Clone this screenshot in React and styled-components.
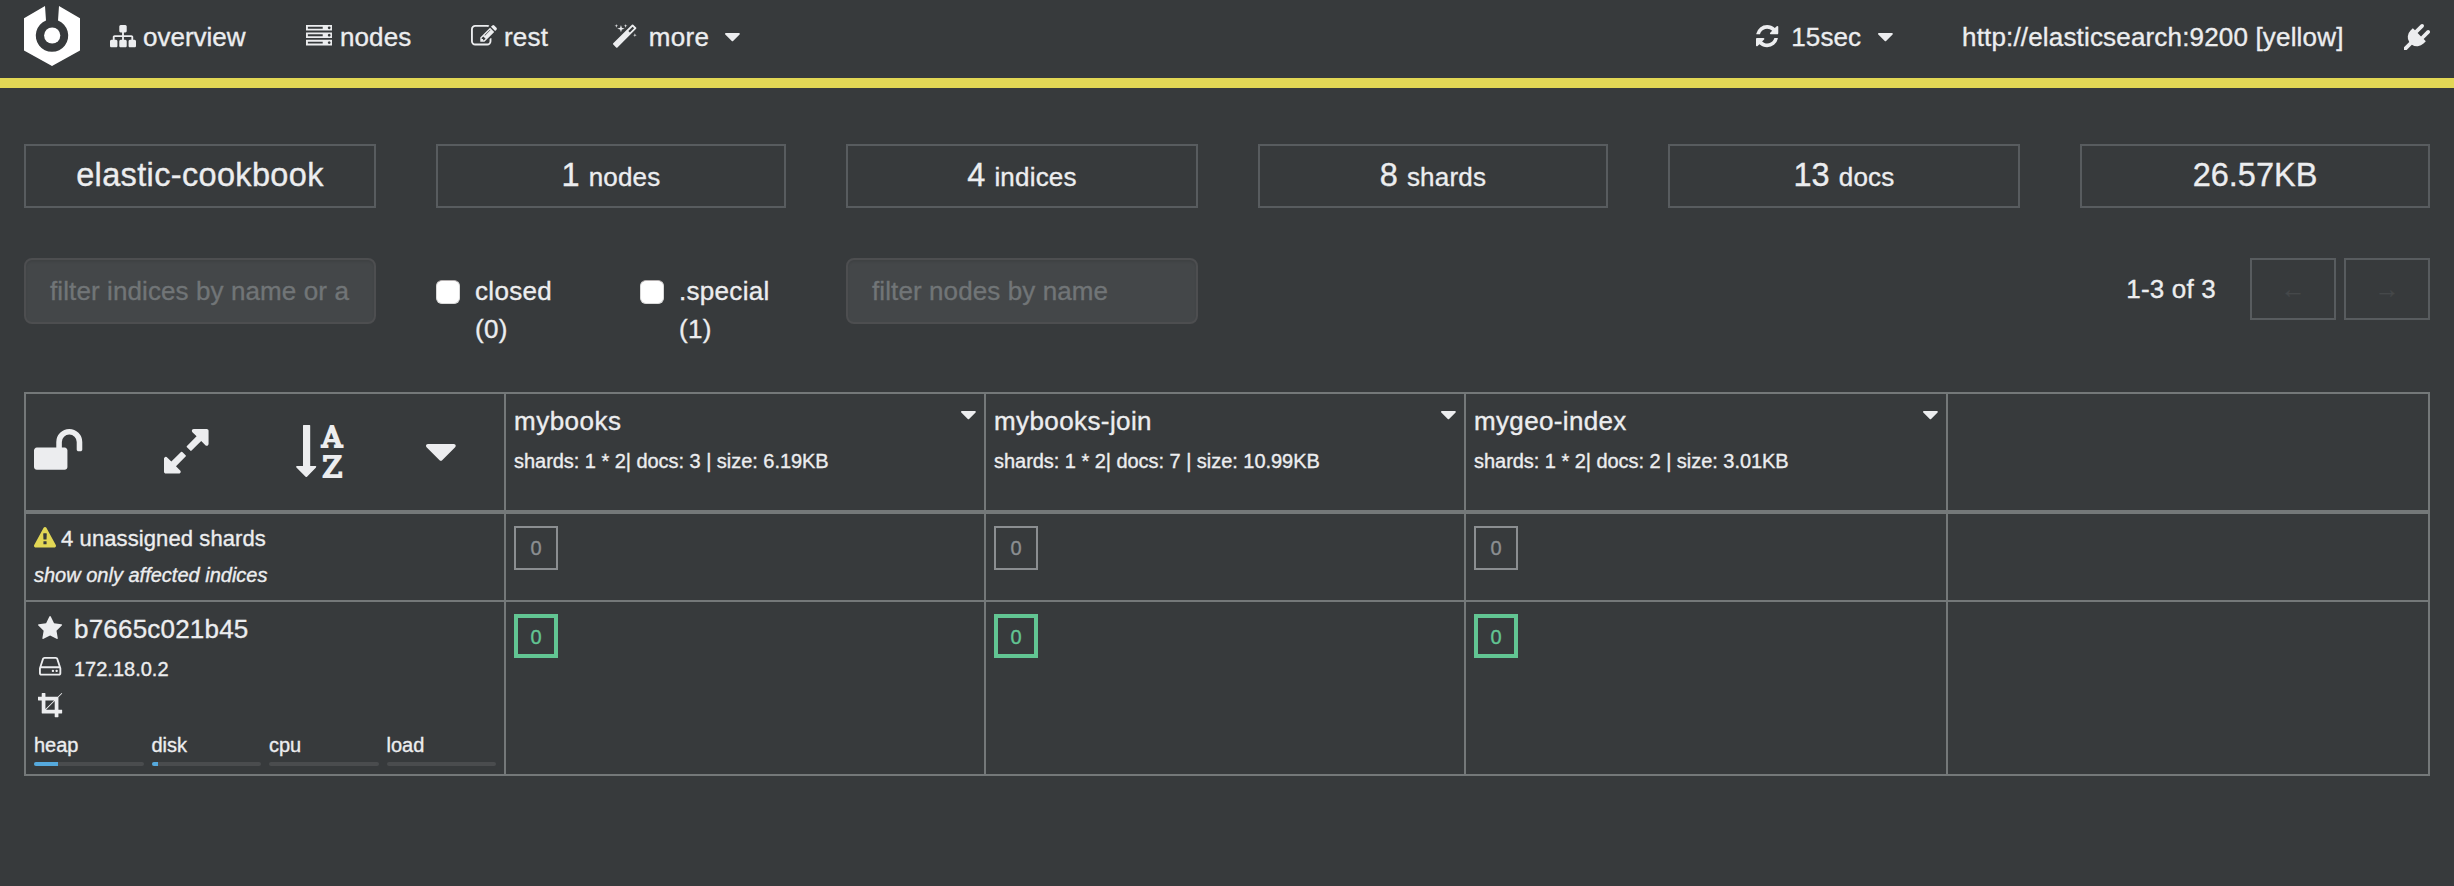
import React from "react";
import styled, { createGlobalStyle } from "styled-components";

const c = {
  bg: "#373a3c",
  text: "#ecedef",
  line: "#747879",
  box: "#585c5f",
  yellow: "#e2d755",
  green: "#62c593",
  muted: "#8b8e91",
  blue: "#55a9dd",
  track: "#4a4c4e",
};

const GlobalStyle = createGlobalStyle`
  *, *::before, *::after { box-sizing: border-box; }
  body {
    margin: 0;
    background: ${c.bg};
    color: ${c.text};
    font: 26px/37px "Liberation Sans", Arial, sans-serif;
    -webkit-text-stroke: 0.35px currentColor;
  }
`;

const Page = styled.div`
  min-height: 886px;
  overflow: hidden;
`;

/* icons: [viewBox cut to the drawing, path] in 1792 units per em */
const ICONS = {
  sitemap: [[0, 128, 1792, 1536], "M1792 1248v320q0 40-28 68t-68 28h-320q-40 0-68-28t-28-68v-320q0-40 28-68t68-28h96v-192h-512v192h96q40 0 68 28t28 68v320q0 40-28 68t-68 28h-320q-40 0-68-28t-28-68v-320q0-40 28-68t68-28h96v-192h-512v192h96q40 0 68 28t28 68v320q0 40-28 68t-68 28h-320q-40 0-68-28t-28-68v-320q0-40 28-68t68-28h96v-192q0-52 38-90t90-38h512v-192h-96q-40 0-68-28t-28-68v-320q0-40 28-68t68-28h320q40 0 68 28t28 68v320q0 40-28 68t-68 28h-96v192h512q52 0 90 38t38 90v192h96q40 0 68 28t28 68z"],
  server: [[0, 128, 1792, 1408], "M128 1408h1024v-128h-1024v128zm0-512h1024v-128h-1024v128zm1568 448q0-40-28-68t-68-28-68 28-28 68 28 68 68 28 68-28 28-68zm-1568-960h1024v-128h-1024v128zm1568 448q0-40-28-68t-68-28-68 28-28 68 28 68 68 28 68-28 28-68zm0-512q0-40-28-68t-68-28-68 28-28 68 28 68 68 28 68-28 28-68zm96 832v384h-1792v-384h1792zm0-512v384h-1792v-384h1792zm0-512v384h-1792v-384h1792z"],
  edit: [[0, 128, 1792, 1408], "M888 1184l116-116-152-152-116 116v56h96v96h56zm440-720q-16-16-33 1l-350 350q-17 17-1 33t33-1l350-350q17-17 1-33zm80 594v190q0 119-84.5 203.5t-203.5 84.5h-832q-119 0-203.5-84.5t-84.5-203.5v-832q0-119 84.5-203.5t203.5-84.5h832q63 0 117 25 15 7 18 23 3 17-9 29l-49 49q-14 14-32 8-23-6-45-6h-832q-66 0-113 47t-47 113v832q0 66 47 113t113 47h832q66 0 113-47t47-113v-126q0-13 9-22l64-64q15-15 35-7t20 29zm-96-738l288 288-672 672h-288v-288zm444 132l-92 92-288-288 92-92q28-28 68-28t68 28l152 152q28 28 28 68t-28 68z"],
  magic: [[91, 0, 1637, 1637], "M1254 581l293-293-107-107-293 293zm447-293q0 27-18 45l-1286 1286q-18 18-45 18t-45-18l-198-198q-18-18-18-45t18-45l1286-1286q18-18 45-18t45 18l198 198q18 18 18 45zm-1351-190l98 30-98 30-30 98-30-98-98-30 98-30 30-98zm350 162l196 60-196 60-60 196-60-196-196-60 196-60 60-196zm930 478l98 30-98 30-30 98-30-98-98-30 98-30 30-98zm-640-640l98 30-98 30-30 98-30-98-98-30 98-30 30-98z"],
  refresh: [[128, 128, 1536, 1536], "M1639 1056q0 5-1 7-64 268-268 434.5t-478 166.5q-146 0-282.5-55t-243.5-157l-129 129q-19 19-45 19t-45-19-19-45v-448q0-26 19-45t45-19h448q26 0 45 19t19 45-19 45l-137 137q71 66 161 102t187 36q134 0 250-65t186-179q11-17 53-117 8-23 30-23h192q13 0 22.5 9.5t9.5 22.5zm25-800v448q0 26-19 45t-45 19h-448q-26 0-45-19t-19-45 19-45l138-138q-148-137-349-137-134 0-250 65t-186 179q-11 17-53 117-8 23-30 23h-199q-13 0-22.5-9.5t-9.5-22.5v-7q65-268 270-434.5t480-166.5q146 0 284 55.5t245 156.5l130-129q19-19 45-19t45 19 19 45z"],
  plug: [[0, 0, 1792, 1792], "M1755 453q37 38 37 90.5t-37 90.5l-401 400 150 150-160 160q-163 163-389.5 186.5t-411.5-100.5l-362 362h-181v-181l362-362q-124-185-100.5-411.5t186.5-389.5l160-160 150 150 400-401q38-37 91-37t90 37 37 90.5-37 90.5l-400 401 234 234 401-400q38-37 91-37t90 37z"],
  caret: [[384, 640, 1024, 576], "M1408 704q0 26-19 45l-448 448q-19 19-45 19t-45-19l-448-448q-19-19-19-45t19-45 45-19h896q26 0 45 19t19 45z"],
  unlock: [[64, 128, 1664, 1408], "M1728 576v256q0 26-19 45t-45 19h-64q-26 0-45-19t-19-45v-256q0-106-75-181t-181-75-181 75-75 181v192h96q40 0 68 28t28 68v576q0 40-28 68t-68 28h-960q-40 0-68-28t-28-68v-576q0-40 28-68t68-28h672v-192q0-185 131.5-316.5t316.5-131.5 316.5 131.5 131.5 316.5z"],
  expand: [[128, 128, 1536, 1536], "M883 1056q0 13-10 23l-332 332 144 144q19 19 19 45t-19 45-45 19h-448q-26 0-45-19t-19-45v-448q0-26 19-45t45-19 45 19l144 144 332-332q10-10 23-10t23 10l114 114q10 10 10 23zm781-864v448q0 26-19 45t-45 19-45-19l-144-144-332 332q-10 10-23 10t-23-10l-114-114q-10-10-10-23t10-23l332-332-144-144q-19-19-19-45t19-45 45-19h448q26 0 45 19t19 45z"],
  warning: [[0, 0, 1792, 1664], "M1024 1375v-190q0-14-9.5-23.5t-22.5-9.5h-192q-13 0-22.5 9.5t-9.5 23.5v190q0 14 9.5 23.5t22.5 9.5h192q13 0 22.5-9.5t9.5-23.5zm-2-374l18-459q0-12-10-19-13-11-24-11h-220q-11 0-24 11-10 7-10 21l17 457q0 10 10 16.5t24 6.5h185q14 0 23.5-6.5t10.5-16.5zm-14-934l768 1408q35 63-2 126-17 29-46.5 46t-63.5 17h-1536q-34 0-63.5-17t-46.5-46q-37-63-2-126l768-1408q17-31 47-49t65-18 65 18 47 49z"],
  star: [[64, 32, 1664, 1588], "M1728 647q0 22-26 48l-363 354 86 500q1 7 1 20 0 21-10.5 35.5t-30.5 14.5q-19 0-40-12l-449-236-449 236q-22 12-40 12-21 0-31.5-14.5t-10.5-35.5q0-6 2-20l86-500-364-354q-25-27-25-48 0-37 56-46l502-73 225-455q19-41 49-41t49 41l225 455 502 73q56 9 56 46z"],
  hdd: [[128, 256, 1536, 1280], "M1168 1216q0 33-23.5 56.5t-56.5 23.5-56.5-23.5-23.5-56.5 23.5-56.5 56.5-23.5 56.5 23.5 23.5 56.5zm256 0q0 33-23.5 56.5t-56.5 23.5-56.5-23.5-23.5-56.5 23.5-56.5 56.5-23.5 56.5 23.5 23.5 56.5zm112 160v-320q0-13-9.5-22.5t-22.5-9.5h-1216q-13 0-22.5 9.5t-9.5 22.5v320q0 13 9.5 22.5t22.5 9.5h1216q13 0 22.5-9.5t9.5-22.5zm-1230-480h1180l-157-482q-4-13-16-21.5t-26-8.5h-782q-14 0-26 8.5t-16 21.5zm1358 160v320q0 66-47 113t-113 47h-1216q-66 0-113-47t-47-113v-320q0-25 16-75l197-606q17-53 63-86t101-33h782q55 0 101 33t63 86l197 606q16 50 16 75z"],
  crop: [[0, 128, 1664, 1664], "M557 1280h595v-595zm-45-45l595-595h-595v595zm1152 77v192q0 14-9 23t-23 9h-224v224q0 14-9 23t-23 9h-192q-14 0-23-9t-9-23v-224h-864q-14 0-23-9t-9-23v-864h-224q-14 0-23-9t-9-23v-192q0-14 9-23t23-9h224v-224q0-14 9-23t23-9h192q14 0 23 9t9 23v224h851l246-247q10-9 23-9t23 9q9 10 9 23t-9 23l-247 246v851h224q14 0 23 9t9 23z"],
};

const Svg = styled.svg`
  display: block;
  flex: none;
  overflow: visible;
  fill: ${(p) => p.$color || "currentColor"};
  margin-bottom: ${(p) => p.$lift || 0}px;
`;

function Icon({ name, em = 26, color, lift }) {
  const [box, d] = ICONS[name];
  return (
    <Svg
      viewBox={box.join(" ")}
      width={(box[2] / 1792) * em}
      height={(box[3] / 1792) * em}
      $color={color}
      $lift={lift}
      aria-hidden="true"
    >
      <path d={d} />
    </Svg>
  );
}

/* top bar */
const Navbar = styled.nav`
  display: flex;
  align-items: center;
  height: 88px;
  padding: 0 24px 4px;
  border-bottom: 10px solid ${c.yellow};
`;
const Brand = styled.div`
  width: 86px;
  margin-bottom: 2px;
`;
const NavItem = styled.div`
  display: flex;
  align-items: center;
  gap: ${(p) => p.$gap}px;
  width: ${(p) => p.$width}px;
  line-height: 74px;
  white-space: nowrap;
`;
const NavLabel = styled.span`
  width: ${(p) => (p.$width ? p.$width + "px" : "auto")};
  letter-spacing: ${(p) => p.$track || 0}px;
`;
const Spacer = styled.div`
  flex: 1;
`;

function Logo() {
  return (
    <Svg width="56" height="60" viewBox="0 0 56 60" $color="#fff">
      <path d="M21 0 L0 12.3 V44.4 L28 60 L56 44.4 V12.3 L35 0 L34 14.6 A16.2 16.2 0 1 1 22 14.6 Z" />
      <circle cx="28.2" cy="29.5" r="8.1" />
    </Svg>
  );
}

/* overview tiles and filters */
const SixColumns = styled.div`
  display: grid;
  grid-template-columns: repeat(3, 352px 350px);
  column-gap: 60px;
  height: ${(p) => p.$height}px;
  padding: 0 24px;
  margin-top: ${(p) => p.$top}px;
`;
const Tile = styled.div`
  height: 64px;
  border: 2px solid ${c.box};
  text-align: center;
  font-size: 32.5px;
  line-height: 58px;
  letter-spacing: ${(p) => p.$track || 0}px;
`;
const Unit = styled.span`
  font-size: 26px;
  letter-spacing: 0.2px;
`;
const TextInput = styled.div`
  height: 66px;
  padding: 0 24px;
  border: 2px solid #4d4e50;
  border-radius: 8px;
  background: #444749;
  box-shadow: inset 0 2px 2px rgba(0, 0, 0, 0.075);
  color: #717577;
  line-height: 62px;
  letter-spacing: ${(p) => p.$track || 0}px;
  white-space: nowrap;
  overflow: hidden;
`;
const Checks = styled.div`
  display: flex;
  padding-top: 14px;
  margin-right: -60px;
`;
const Check = styled.label`
  display: flex;
  width: ${(p) => p.$width}px;
  line-height: 38px;
  letter-spacing: 0.3px;
`;
const Checkbox = styled.span`
  width: 24px;
  height: 24px;
  margin: 8px ${(p) => p.$gap}px 0 0;
  border-radius: 6px;
  background: #fff;
  border: 1px solid #d9d9d9;
  border-top-color: #b5b0b0;
`;
const Pager = styled.div`
  grid-column: 4 / 7;
  display: flex;
  justify-content: flex-end;
  line-height: 62px;
`;
const PageRange = styled.span`
  margin-right: 34px;
  letter-spacing: 0.2px;
`;
const PageButton = styled.span`
  display: flex;
  align-items: center;
  justify-content: center;
  width: 86px;
  height: 62px;
  margin-left: ${(p) => (p.$next ? 8 : 0)}px;
  border: 2px solid ${c.box};
  color: #45484a;
  font: 25px/58px "Liberation Sans", sans-serif;
`;

/* shard table */
const Table = styled.div`
  margin: 48px 24px 0;
  border: solid ${c.line};
  border-width: 2px 2px 2px 0;
`;
const Row = styled.div`
  display: grid;
  grid-template-columns: 480px 480px 480px 482px 1fr;
  height: ${(p) => p.$height}px;
  border-bottom: ${(p) => p.$line || 0}px solid ${c.line};
`;
const Cell = styled.div`
  padding: 8px 8px 0;
  border-left: 2px solid ${c.line};
  min-width: 0;
`;
const ShardCell = styled(Cell)`
  padding-top: 12px;
`;
const Tools = styled(Cell)`
  display: flex;
  padding-top: 0;
`;
const Tool = styled.div`
  width: ${(p) => p.$width}px;
  padding-top: ${(p) => p.$top}px;
`;
const SortLetter = styled.text`
  font: 28.5px "DejaVu Serif", serif;
  stroke: currentColor;
  stroke-width: 1.9px;
`;
const IndexHead = styled.div`
  display: flex;
  justify-content: space-between;
  line-height: 38px;
  letter-spacing: ${(p) => p.$track}px;
`;
const MenuCaret = styled.span`
  padding-top: 9px;
`;
const IndexInfo = styled.div`
  margin-top: 2px;
  font-size: 20px;
  line-height: 38px;
  letter-spacing: -0.04px;
  white-space: nowrap;
`;
const Unassigned = styled.div`
  display: flex;
  align-items: center;
  gap: 5px;
  font-size: 22px;
  line-height: 33px;
  letter-spacing: 0.1px;
`;
const Affected = styled.div`
  font-size: 20px;
  font-style: italic;
  line-height: 40px;
`;
const Shard = styled.div`
  width: 44px;
  height: 44px;
  border: ${(p) => (p.$assigned ? 4 : 2)}px solid ${(p) => (p.$assigned ? c.green : c.muted)};
  color: ${(p) => (p.$assigned ? c.green : c.muted)};
  font-size: 20px;
  line-height: ${(p) => (p.$assigned ? 38 : 41)}px;
  text-align: center;
`;
const NodeLine = styled.div`
  display: flex;
  align-items: center;
  height: ${(p) => p.$height}px;
  font-size: ${(p) => p.$size || 20}px;
  line-height: ${(p) => p.$height}px;
  letter-spacing: ${(p) => p.$track || 0}px;
`;
const NodeIcon = styled.span`
  display: flex;
  justify-content: center;
  width: 33px;
  margin-right: 7px;
`;
const Meters = styled.div`
  display: grid;
  grid-template-columns: repeat(4, 1fr);
  column-gap: 8px;
  margin-top: 7px;
  font-size: 20px;
  line-height: 34px;
`;
const Track = styled.div`
  height: 4px;
  border-radius: 2px;
  background: ${c.track};
  overflow: hidden;
`;
const Fill = styled.div`
  height: 4px;
  background: ${c.blue};
`;

const tiles = [
  { n: "elastic-cookbook", track: 0.35 },
  { n: "1", unit: "nodes" },
  { n: "4", unit: "indices" },
  { n: "8", unit: "shards" },
  { n: "13", unit: "docs" },
  { n: "26.57KB", track: 0 },
];
const indices = [
  { name: "mybooks", docs: 3, size: "6.19KB", track: 0.5 },
  { name: "mybooks-join", docs: 7, size: "10.99KB", track: 0.4 },
  { name: "mygeo-index", docs: 2, size: "3.01KB", track: 0.35 },
];
const meters = [
  { name: "heap", value: 22 },
  { name: "disk", value: 5.5 },
  { name: "cpu", value: 0 },
  { name: "load", value: 0 },
];

export default function App() {
  return (
    <Page>
      <GlobalStyle />
      <Navbar>
        <Brand><Logo /></Brand>
        <NavItem $width={196} $gap={7}>
          <Icon name="sitemap" lift={2} />
          <NavLabel>overview</NavLabel>
        </NavItem>
        <NavItem $width={165} $gap={8}>
          <Icon name="server" lift={3} />
          <NavLabel $track={0.1}>nodes</NavLabel>
        </NavItem>
        <NavItem $width={142} $gap={7}>
          <Icon name="edit" lift={3} />
          <NavLabel $track={0.2}>rest</NavLabel>
        </NavItem>
        <NavItem $width={140} $gap={12}>
          <Icon name="magic" lift={2} />
          <NavLabel $width={64} $track={0.3}>more</NavLabel>
          <Icon name="caret" />
        </NavItem>
        <Spacer />
        <NavItem $width={206} $gap={13}>
          <Icon name="refresh" lift={1} />
          <NavLabel $width={74} $track={0.1}>15sec</NavLabel>
          <Icon name="caret" />
        </NavItem>
        <NavItem $width={442}>
          <NavLabel $track={0.17}>http://elasticsearch:9200 [yellow]</NavLabel>
        </NavItem>
        <Icon name="plug" />
      </Navbar>

      <SixColumns $top={56} $height={64}>
        {tiles.map((t) => (
          <Tile key={t.n} $track={t.track}>
            {t.n}
            {t.unit && <> <Unit>{t.unit}</Unit></>}
          </Tile>
        ))}
      </SixColumns>

      <SixColumns $top={50} $height={86}>
        <TextInput $track={0.1}>filter indices by name or a</TextInput>
        <Checks>
          <Check $width={204}>
            <Checkbox $gap={15} />
            <span>closed<br />(0)</span>
          </Check>
          <Check $width={190}>
            <Checkbox $gap={15} />
            <span>.special<br />(1)</span>
          </Check>
        </Checks>
        <TextInput $track={0.1}>filter nodes by name</TextInput>
        <Pager>
          <PageRange>1-3 of 3</PageRange>
          <PageButton>←</PageButton>
          <PageButton $next>→</PageButton>
        </Pager>
      </SixColumns>

      <Table>
        <Row $height={120} $line={4}>
          <Tools>
            <Tool $width={130} $top={35}><Icon name="unlock" em={52} /></Tool>
            <Tool $width={132} $top={35}><Icon name="expand" em={52} /></Tool>
            <Tool $width={130} $top={31}>
              <Svg width="50" height="53" viewBox="0 0 50 53">
                <path d="M7 0.6 q0-.6 .6-.6 h6 q.6 0 .6 .6 V41 h5.4 q1.2 .3 .4 1.4 L11 51.8 q-.7 .6-1.4 0 L.4 42.4 q-.8-1.1 .4-1.4 H7z" />
                <SortLetter x="25.8" y="21.8" textLength="20.5" lengthAdjust="spacingAndGlyphs">A</SortLetter>
                <SortLetter x="26.2" y="51.8" textLength="20" lengthAdjust="spacingAndGlyphs">Z</SortLetter>
              </Svg>
            </Tool>
            <Tool $width={40} $top={50}><Icon name="caret" em={52} /></Tool>
          </Tools>
          {indices.map((i) => (
            <Cell key={i.name}>
              <IndexHead $track={i.track}>
                {i.name}
                <MenuCaret><Icon name="caret" /></MenuCaret>
              </IndexHead>
              <IndexInfo>shards: 1 * 2| docs: {i.docs} | size: {i.size}</IndexInfo>
            </Cell>
          ))}
          <Cell />
        </Row>
        <Row $height={88} $line={2}>
          <Cell>
            <Unassigned>
              <Icon name="warning" em={22} color={c.yellow} lift={2} />
              4 unassigned shards
            </Unassigned>
            <Affected>show only affected indices</Affected>
          </Cell>
          {indices.map((i) => (
            <ShardCell key={i.name}><Shard>0</Shard></ShardCell>
          ))}
          <Cell />
        </Row>
        <Row $height={172}>
          <Cell>
            <NodeLine $height={38} $size={26} $track={0.2}>
              <NodeIcon><Icon name="star" lift={2} /></NodeIcon>
              b7665c021b45
            </NodeLine>
            <NodeLine $height={42}>
              <NodeIcon><Icon name="hdd" lift={5} /></NodeIcon>
              172.18.0.2
            </NodeLine>
            <NodeLine $height={31}>
              <NodeIcon><Icon name="crop" /></NodeIcon>
            </NodeLine>
            <Meters>
              {meters.map((m) => (
                <div key={m.name}>
                  {m.name}
                  <Track><Fill style={{ width: `${m.value}%` }} /></Track>
                </div>
              ))}
            </Meters>
          </Cell>
          {indices.map((i) => (
            <ShardCell key={i.name}><Shard $assigned>0</Shard></ShardCell>
          ))}
          <Cell />
        </Row>
      </Table>
    </Page>
  );
}
